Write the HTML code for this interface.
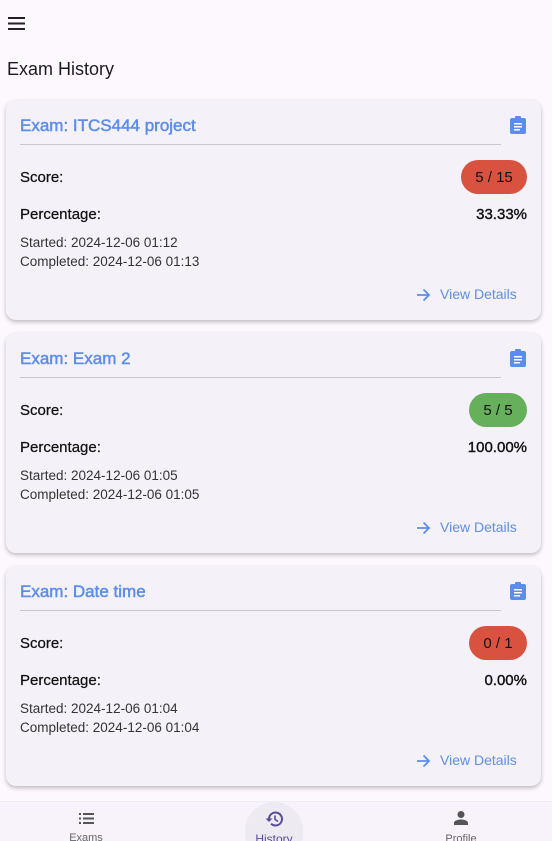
<!DOCTYPE html>
<html style="overflow:hidden;height:841px"><head><meta charset="utf-8"><style>
body{margin:0;width:552px;height:841px;background:#fdf8fd;font-family:"Liberation Sans",Roboto,sans-serif;position:relative;overflow:hidden;color:#1c1b1f}
.menu{position:absolute;left:8px;top:17px}
h1{position:absolute;left:7px;top:59px;margin:0;font-size:18px;font-weight:normal;color:#1c1b1f}
.card{position:absolute;left:6px;width:535px;height:220px;background:#f4f2f8;border-radius:10px;box-shadow:0 2px 4px rgba(0,0,0,.25)}
.t{position:absolute;left:14px;top:16px;font-size:17px;color:#5c8ded;-webkit-text-stroke:0.5px #5c8ded}
.ic{position:absolute;right:15px;top:16px}
.hr{position:absolute;left:14px;right:40px;top:44px;height:1px;background:#c9c7cd}
.lab{position:absolute;left:14px;font-size:15px;color:#111;-webkit-text-stroke:0.25px #111}
.pill{position:absolute;right:14px;top:60px;height:34px;border-radius:17px;font-size:15px;line-height:35px;text-align:center;color:#111}
.pct{position:absolute;right:14px;top:106px;font-size:15px;color:#111;-webkit-text-stroke:0.4px #111}
.d{position:absolute;left:14px;font-size:13.5px;color:#333}
.vd{position:absolute;left:410px;top:186px;font-size:14px;color:#5c8ded}
.vd svg{vertical-align:-3px;margin-right:9px}
.nav{position:absolute;left:0;top:801px;width:552px;height:40px;background:#f8f2fa;border-top:1px solid #eee;overflow:hidden}
.ni{position:absolute;top:0;text-align:center;font-size:11px;color:#666}
</style></head><body>
<svg class="menu" width="17" height="13" viewBox="0 0 17 13"><rect y="0" width="17" height="2" fill="#222"/><rect y="5.5" width="17" height="2" fill="#222"/><rect y="11" width="17" height="2" fill="#222"/></svg>
<h1>Exam History</h1>

<div class="card" style="top:100px">
<div class="t">Exam: ITCS444 project</div>
<svg class="ic" width="16" height="18" viewBox="0 0 16 18"><rect x="0" y="2" width="16" height="16" rx="2" fill="#5c8ded"/><rect x="5" y="0" width="6" height="4" rx="1" fill="#5c8ded"/><rect x="4" y="7" width="8" height="1.5" fill="#fff"/><rect x="4" y="10" width="8" height="1.5" fill="#fff"/><rect x="4" y="13" width="6" height="1.5" fill="#fff"/></svg>
<div class="hr"></div>
<div class="lab" style="top:69px">Score:</div>
<div class="pill" style="width:66px;background:#d9523f">5 / 15</div>
<div class="lab" style="top:106px">Percentage:</div>
<div class="pct">33.33%</div>
<div class="d" style="top:135px">Started: 2024-12-06 01:12</div>
<div class="d" style="top:154px">Completed: 2024-12-06 01:13</div>
<div class="vd"><svg width="15" height="14" viewBox="0 0 15 14"><path d="M1 7H13M7.5 1.5L13 7L7.5 12.5" stroke="#5c8ded" stroke-width="1.8" fill="none"/></svg>View Details</div>
</div>

<div class="card" style="top:333px">
<div class="t">Exam: Exam 2</div>
<svg class="ic" width="16" height="18" viewBox="0 0 16 18"><rect x="0" y="2" width="16" height="16" rx="2" fill="#5c8ded"/><rect x="5" y="0" width="6" height="4" rx="1" fill="#5c8ded"/><rect x="4" y="7" width="8" height="1.5" fill="#fff"/><rect x="4" y="10" width="8" height="1.5" fill="#fff"/><rect x="4" y="13" width="6" height="1.5" fill="#fff"/></svg>
<div class="hr"></div>
<div class="lab" style="top:69px">Score:</div>
<div class="pill" style="width:58px;background:#67b05b">5 / 5</div>
<div class="lab" style="top:106px">Percentage:</div>
<div class="pct">100.00%</div>
<div class="d" style="top:135px">Started: 2024-12-06 01:05</div>
<div class="d" style="top:154px">Completed: 2024-12-06 01:05</div>
<div class="vd"><svg width="15" height="14" viewBox="0 0 15 14"><path d="M1 7H13M7.5 1.5L13 7L7.5 12.5" stroke="#5c8ded" stroke-width="1.8" fill="none"/></svg>View Details</div>
</div>

<div class="card" style="top:566px">
<div class="t">Exam: Date time</div>
<svg class="ic" width="16" height="18" viewBox="0 0 16 18"><rect x="0" y="2" width="16" height="16" rx="2" fill="#5c8ded"/><rect x="5" y="0" width="6" height="4" rx="1" fill="#5c8ded"/><rect x="4" y="7" width="8" height="1.5" fill="#fff"/><rect x="4" y="10" width="8" height="1.5" fill="#fff"/><rect x="4" y="13" width="6" height="1.5" fill="#fff"/></svg>
<div class="hr"></div>
<div class="lab" style="top:69px">Score:</div>
<div class="pill" style="width:58px;background:#d9523f">0 / 1</div>
<div class="lab" style="top:106px">Percentage:</div>
<div class="pct">0.00%</div>
<div class="d" style="top:135px">Started: 2024-12-06 01:04</div>
<div class="d" style="top:154px">Completed: 2024-12-06 01:04</div>
<div class="vd"><svg width="15" height="14" viewBox="0 0 15 14"><path d="M1 7H13M7.5 1.5L13 7L7.5 12.5" stroke="#5c8ded" stroke-width="1.8" fill="none"/></svg>View Details</div>
</div>

<div class="nav">
<div style="position:absolute;left:245px;top:0;width:58px;height:60px;border-radius:29px;background:#eeeaf2"></div>
<div class="ni" style="left:56px;width:60px"><svg style="margin-top:11px" width="15" height="11" viewBox="0 0 15 11"><rect x="0" y="0" width="2" height="2" fill="#555"/><rect x="4" y="0" width="11" height="2" fill="#555"/><rect x="0" y="4.5" width="2" height="2" fill="#555"/><rect x="4" y="4.5" width="11" height="2" fill="#555"/><rect x="0" y="9" width="2" height="2" fill="#555"/><rect x="4" y="9" width="11" height="2" fill="#555"/></svg><div style="margin-top:5px">Exams</div></div>
<div class="ni" style="left:244px;width:60px;color:#5a4a9a;font-size:12px"><svg style="margin-top:9px" width="18" height="16" viewBox="0 0 18 16"><path d="M4 8A6.5 6.5 0 1 1 6 12.7" stroke="#5a4a9a" stroke-width="2" fill="none"/><path d="M0.5 7.5L4 11L7.5 7.5Z" fill="#5a4a9a"/><path d="M10 4.5V8.5L13 10.5" stroke="#5a4a9a" stroke-width="1.6" fill="none"/></svg><div style="margin-top:2px">History</div></div>
<div class="ni" style="left:431px;width:60px"><svg style="margin-top:9px" width="14" height="14" viewBox="0 0 14 14"><circle cx="7" cy="3.5" r="3.5" fill="#555"/><path d="M0 14V12C0 9.5 4 8.5 7 8.5S14 9.5 14 12V14Z" fill="#555"/></svg><div style="margin-top:5px">Profile</div></div>
</div>
</body></html>
